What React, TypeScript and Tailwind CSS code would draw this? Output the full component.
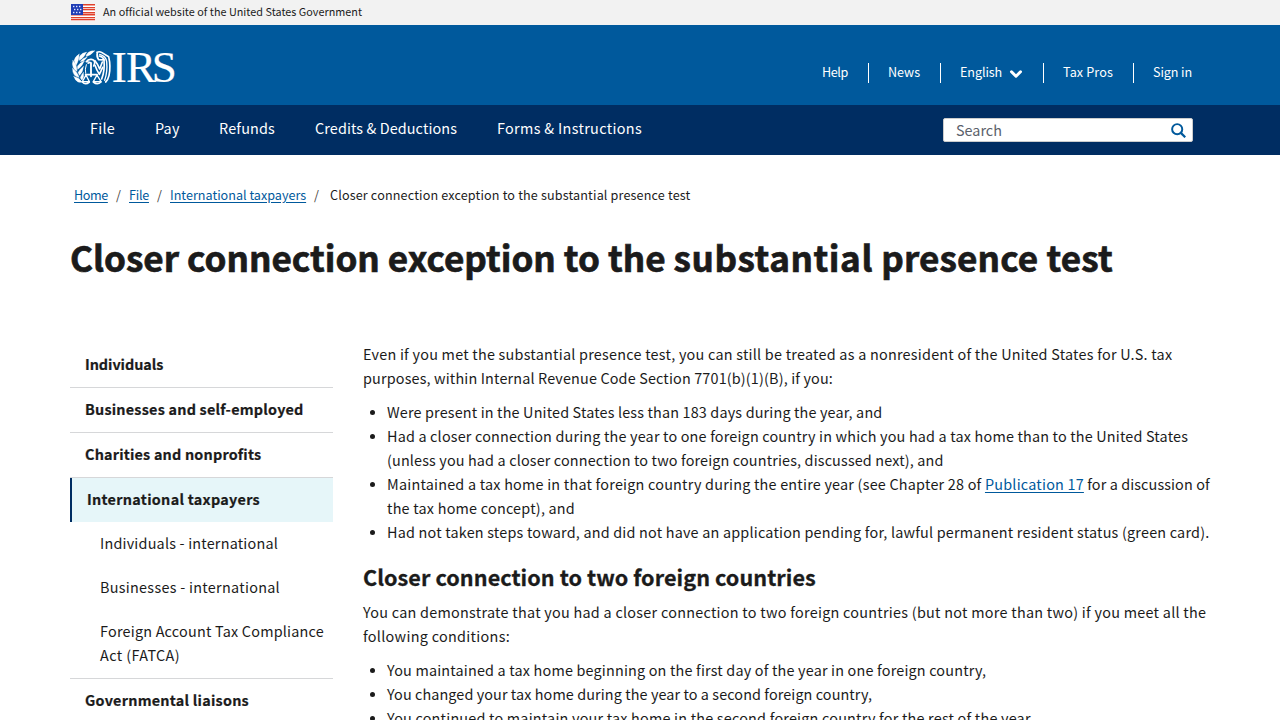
import { ChevronDown } from "lucide-react";
import type { ReactNode } from "react";

function Flag() {
  return (
    <svg className="block h-[17px] w-6" viewBox="0 0 24 17" shapeRendering="crispEdges">
      <rect width="24" height="17" fill="#fff" />
      {[0, 3, 5, 8, 10, 13, 15].map((y) => (
        <rect key={y} y={y} width="24" height={y % 2 ? 1.3 : 1.5} fill="#e0402a" shapeRendering="auto" />
      ))}
      <rect width="12" height="11" fill="#1f3db5" />
      {[2, 5, 8].map((y, r) =>
        [0, 1, 2].map((c) => (
          <rect key={`${y}-${c}`} x={2 + c * 3 + (r === 1 ? 1 : 0)} y={y - 0.2} width="1.4" height="1.4" fill="#dfe4ff" shapeRendering="auto" />
        )),
      )}
    </svg>
  );
}

function Emblem() {
  return (
    <svg className="block h-9 w-10 overflow-visible" viewBox="-2 -3 120 108" fill="none" stroke="#fff" strokeLinecap="round" strokeLinejoin="round">
      <g fill="#fff" strokeWidth="1.4">
        <path d="M68 3Q58 1 49 8Q44 13 43 19Q57 17 68 3Z" />
        <path d="M44 7Q32 8 25 17Q21 24 23 31Q37 24 44 7Z" />
        <path d="M22 13Q10 20 8 31Q8 39 13 46Q22 32 22 13Z" />
        <path d="M4 32Q0 43 5 53Q8 60 16 64Q16 45 4 32Z" />
        <path d="M3 56Q2 67 9 76Q14 81 22 82Q17 65 3 56Z" />
        <path d="M7 80Q10 90 18 95Q24 98 31 96Q23 83 7 80Z" />
        <path d="M46 21Q33 25 26 34Q37 36 46 21Z" />
        <path d="M37 34Q25 38 18 48Q17 53 18 58Q31 50 37 34Z" />
        <path d="M35 50Q25 56 20 67Q21 72 23 76Q34 66 35 50Z" />
        <path d="M35 68Q28 75 26 83Q28 87 31 90Q38 80 35 68Z" />
      </g>
      <g strokeWidth="4">
        <path d="M44 35Q49 27 59 28Q70 29 69 40L66 48" strokeWidth="5" />
        <path d="M45 35L56 37L49 40" />
        <path d="M44 44Q39 58 42 70" strokeWidth="3" />
        <path d="M58 39V79M42 74H76" strokeWidth="5.5" />
        <path d="M43 75L32 95H53ZM76 75L65 95H88Z" strokeWidth="4" />
        <path d="M32 96Q41 106 53 96M65 96Q77 106 88 96" strokeWidth="5" />
        <path d="M76 7Q83 3 91 8L111 20Q118 50 112 77Q109 90 102 96" strokeWidth="5" />
        <path d="M77 9Q74 20 81 29L98 30Q94 20 83 18" strokeWidth="5" />
        <path d="M84 13Q103 18 105 35Q108 66 99 91" />
        <path d="M97 31Q100 61 90 87" strokeWidth="5" />
        <path d="M70 32Q79 43 84 57L92 36" strokeWidth="5" />
        <path d="M70 46Q75 61 83 73L93 52" strokeWidth="5" />
      </g>
    </svg>
  );
}

const noto = "font-['Noto_Sans_CJK_SC','Noto_Sans',sans-serif]";
const linkCls = "text-[#00599c] underline decoration-1 underline-offset-[1.5px]";

const utility = [
  { label: "Help", cls: "w-[46px] tracking-[-0.4px]" },
  { label: "News", cls: "w-[72px] border-l pl-[19px] tracking-[-0.03px]" },
  { label: "English", cls: "w-[103px] border-l pl-[19px] tracking-[-0.1px]", chevron: true },
  { label: "Tax Pros", cls: "w-[90px] border-l pl-[19px] tracking-[0.13px]" },
  { label: "Sign in", cls: "w-[60px] border-l pl-[19px] tracking-[-0.1px]" },
];

const menu = [
  { label: "File", cls: "w-[65px] tracking-[0.26px]" },
  { label: "Pay", cls: "w-[64px] tracking-[0.2px]" },
  { label: "Refunds", cls: "w-[96px] tracking-[0.17px]" },
  { label: "Credits & Deductions", cls: "w-[182px] tracking-[0.1px]" },
  { label: "Forms & Instructions", cls: "tracking-[0.336px]" },
];

function L({ t, children }: { t: string; children: ReactNode }) {
  return <span className={`block whitespace-nowrap ${t}`}>{children}</span>;
}

function Side({ t, children }: { t: string; children: ReactNode }) {
  return <li className={`border-b border-[#d6d7d9] px-[15px] pt-[9px] pb-[11px] font-bold [-webkit-text-stroke:0.2px_#1b1b1b] ${t}`}>{children}</li>;
}

export default function App() {
  return (
    <div className={`h-[720px] w-[1280px] overflow-hidden bg-white text-[14.4px] leading-6 text-[#1b1b1b] ${noto}`}>
      <div className="flex h-[25px] items-center bg-[#f2f2f2] pl-[71px]">
        <Flag />
        <span className="ml-2 pb-[3px] text-[10.8px] leading-4 tracking-[0.026px]">An official website of the United States Government</span>
      </div>

      <header>
        <div className="flex h-20 justify-between bg-[#00599c] pl-[71px] text-white">
          <div className="flex pt-6">
            <Emblem />
            <svg className="-ml-px block h-9 w-[68px] overflow-visible" viewBox="0 0 68 36">
              <text x="1.7 16.1 41.8" y="33" fill="#fff" stroke="#fff" strokeWidth="0.2" fontFamily="'Liberation Serif', serif" fontSize="45">IRS</text>
            </svg>
          </div>
          <nav className="mt-[38px] flex h-5 w-[458px] text-[12.6px] leading-5">
            {utility.map((u) => (
              <a key={u.label} className={`flex items-center border-white pb-0.5 whitespace-nowrap ${u.cls}`}>
                {u.label}
                {u.chevron && <ChevronDown className="mt-[3px] ml-[5px] size-[18px]" strokeWidth={4} />}
              </a>
            ))}
          </nav>
        </div>
        <div className="flex h-[50px] justify-between bg-[#002d62] pr-[87px] pl-[90px] text-white">
          <nav className="flex pt-[11px]">
            {menu.map((m) => (
              <a key={m.label} className={`whitespace-nowrap ${m.cls}`}>{m.label}</a>
            ))}
          </nav>
          <div className="mt-[13px] flex h-6 w-[250px] items-center justify-between rounded-[2px] border border-[#ccc] bg-white pr-[6px] pl-3 text-[#5b616b]">
            <span>Search</span>
            <svg className="mt-px size-[15px]" viewBox="0 0 16 16" fill="none" stroke="#00599c" strokeWidth="2.1">
              <circle cx="6.6" cy="6.6" r="5.4" />
              <path d="M10.5 10.5L15.2 15.2" strokeWidth="2.4" />
            </svg>
          </div>
        </div>
      </header>

      <div className="mt-[30px] flex h-5 items-center pl-[74px] text-[12.6px] leading-5 whitespace-nowrap">
        <a className={`w-[34px] tracking-[-0.4px] ${linkCls}`}>Home</a>
        <span className="w-[21px] pl-2 text-[#494440]">/</span>
        <a className={`w-5 tracking-[-0.25px] ${linkCls}`}>File</a>
        <span className="w-[21px] pl-2 text-[#494440]">/</span>
        <a className={`w-[136px] ${linkCls}`}>International taxpayers</a>
        <span className="w-6 pl-2 text-[#494440]">/</span>
        <span className="tracking-[0.15px]">Closer connection exception to the substantial presence test</span>
      </div>

      <h1 className="mt-[30px] ml-[70px] text-[35.1px] leading-[44px] font-bold whitespace-nowrap tracking-[0.02px] [-webkit-text-stroke:0.7px_#1b1b1b]">
        Closer connection exception to the <span className="tracking-[0.58px]">substantial</span>
        <span className="tracking-[0.16px]"> presence test</span>
      </h1>

      <main className="mt-16 flex gap-[30px] pl-[70px]">
        <ul className="w-[263px] shrink-0">
          <Side t="tracking-[-0.06px]">Individuals</Side>
          <Side t="tracking-[0.22px]">Businesses and self-employed</Side>
          <Side t="tracking-[0.19px]">Charities and nonprofits</Side>
          <li className="border-b border-[#d6d7d9]">
            <div className="border-l-2 border-[#002d62] bg-[#e6f6f9] px-[15px] pt-[9px] pb-[11px] font-bold tracking-[0.283px] [-webkit-text-stroke:0.2px_#1b1b1b]">International taxpayers</div>
            <ul className="pl-[30px]">
              <li className="pt-[9px] pb-[11px] tracking-[0.2px]">Individuals - international</li>
              <li className="pt-[9px] pb-[11px] tracking-[0.288px]">Businesses - international</li>
              <li className="pt-[9px] pb-[11px]">
                <L t="tracking-[0.216px]">Foreign Account Tax Compliance</L>
                <L t="tracking-[0.392px]">Act (FATCA)</L>
              </li>
            </ul>
          </li>
          <Side t="tracking-[0.237px]">Governmental liaisons</Side>
        </ul>

        <article className="-mt-px w-[850px]">
          <p>
            <L t="tracking-[0.238px]">Even if you met the substantial presence test, you can still be treated as a nonresident of the United States for U.S. tax</L>
            <L t="tracking-[0.151px]">purposes, within Internal Revenue Code Section 7701(b)(1)(B), if you:</L>
          </p>
          <ul className="mt-2.5 list-disc pl-6 marker:text-[13px]">
            <li><L t="tracking-[0.155px]">Were present in the United States less than 183 days during the year, and</L></li>
            <li>
              <L t="tracking-[0.176px]">Had a closer connection during the year to one foreign country in which you had a tax home than to the United States</L>
              <L t="tracking-[0.145px]">(unless you had a closer connection to two foreign countries, discussed next), and</L>
            </li>
            <li>
              <L t="tracking-[0.216px]">
                Maintained a tax home in that foreign country during the entire year (see Chapter 28 of <a className={linkCls}>Publication 17</a>
                <span className="tracking-[0.1px]"> for a discussion of</span>
              </L>
              <L t="tracking-[0.218px]">the tax home concept), and</L>
            </li>
            <li><L t="tracking-[0.2px]">Had not taken steps toward, and did not have an application pending for, lawful permanent resident status (green card).</L></li>
          </ul>
          <h2 className="mt-5 text-[21.6px] leading-[26px] font-bold tracking-[0.07px] [-webkit-text-stroke:0.3px_#1b1b1b]">Closer connection to two foreign countries</h2>
          <p className="mt-2.5">
            <L t="tracking-[0.265px]">You can demonstrate that you had a closer connection to two foreign countries (but not more than two) if you meet all the</L>
            <L t="tracking-[0.301px]">following conditions:</L>
          </p>
          <ul className="mt-2.5 list-disc pl-6 marker:text-[13px]">
            <li><L t="tracking-[0.182px]">You maintained a tax home beginning on the first day of the year in one foreign country,</L></li>
            <li><L t="tracking-[0.09px]">You changed your tax home during the year to a second foreign country,</L></li>
            <li><L t="tracking-[0.206px]">You continued to maintain your tax home in the second foreign country for the rest of the year,</L></li>
          </ul>
        </article>
      </main>
    </div>
  );
}
